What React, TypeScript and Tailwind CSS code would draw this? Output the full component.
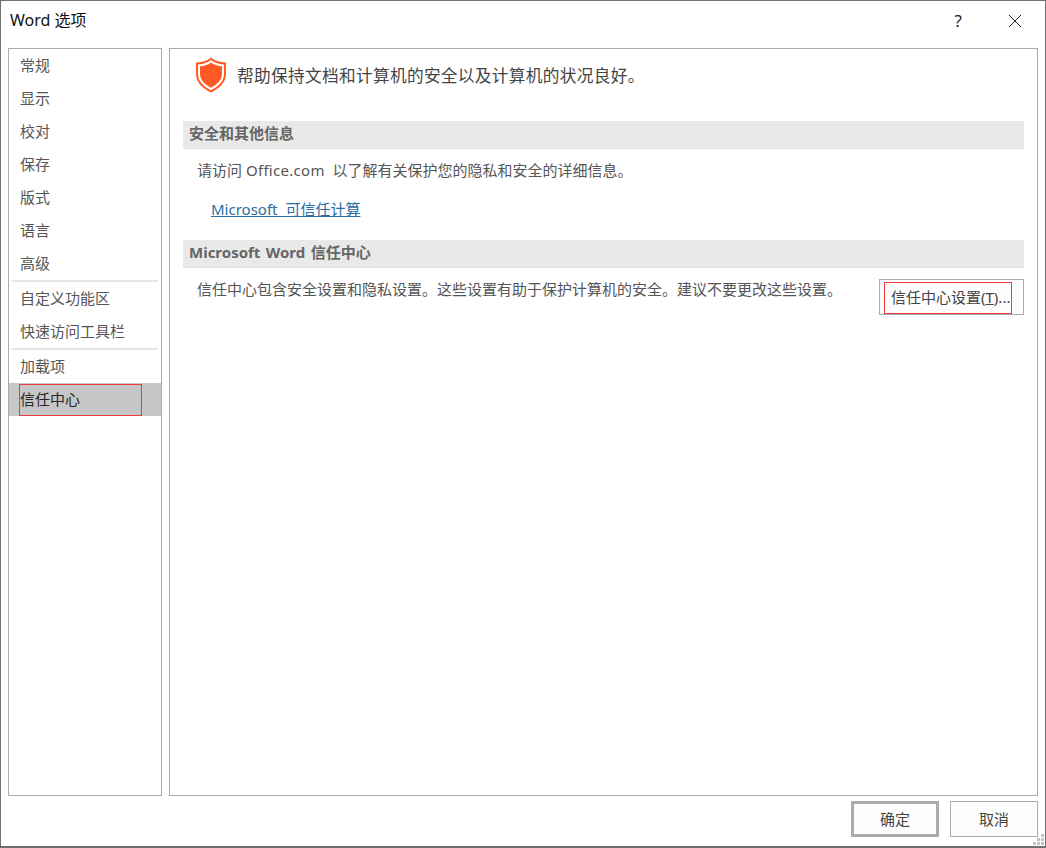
import React from "react";

const font = "[font-family:'Noto_Sans','Noto_Sans_CJK_SC',sans-serif]";

const groups = [
  ["常规", "显示", "校对", "保存", "版式", "语言", "高级"],
  ["自定义功能区", "快速访问工具栏"],
  ["加载项", "信任中心"],
];

function Shield() {
  return (
    <svg width="32" height="36" viewBox="0 0 32 36" className="shrink-0">
      <path
        d="M16 0.5 C19 3.5 24 5 31 5.5 L31 17 C31 25.5 24 31.5 16 35.5 C8 31.5 1 25.5 1 17 L1 5.5 C8 5 13 3.5 16 0.5 Z"
        fill="#ff5a24"
      />
      <path
        d="M16 3 C19 5.6 23.5 7 29 7.4 L29 17 C29 24.4 23 29.6 16 33.2 C9 29.6 3 24.4 3 17 L3 7.4 C8.5 7 13 5.6 16 3 Z"
        fill="#fff"
      />
      <path
        d="M16 5.4 C18.8 7.6 22.6 8.9 27 9.2 L27 17 C27 23 21.8 27.6 16 30.8 C10.2 27.6 5 23 5 17 L5 9.2 C9.4 8.9 13.2 7.6 16 5.4 Z"
        fill="#ff5a24"
      />
    </svg>
  );
}

function SectionHeader({ children }: { children: React.ReactNode }) {
  return (
    <div className="h-7 bg-[#e9e9e9] border-b border-[#e2e2e2] pl-[6px] pb-[2px] flex items-center text-[15px] font-bold text-[#666666] [word-spacing:1.5px]">
      {children}
    </div>
  );
}

function Sidebar() {
  return (
    <div className="w-[154px] shrink-0 border border-[#ababab]">
      {groups.map((items, g) => (
        <div key={g}>
          {g > 0 && <div className="mx-[3px] h-[2px] bg-[#e6e6e6]" />}
          {items.map((item) =>
            item === "信任中心" ? (
              <div key={item} className="h-[33px] bg-[#c6c6c6] text-[#262626] flex pt-[1px]">
                <span className="ml-[10px] w-[123px] border border-[#ee3b3b] pb-[2px] flex items-center text-[15px]">
                  {item}
                </span>
              </div>
            ) : (
              <div
                key={item}
                className="h-[33px] pl-[11px] flex items-center text-[15px] text-[#555555]"
              >
                {item}
              </div>
            ),
          )}
        </div>
      ))}
    </div>
  );
}

export default function App() {
  return (
    <div
      className={`${font} w-[1046px] h-[848px] bg-white border-t border-l border-r border-b-2 border-[#6f6f6f] flex flex-col overflow-hidden relative`}
    >
      {/* Title bar */}
      <div className="h-[47px] shrink-0 flex items-center pl-[9px] pb-[8px]">
        <span className="text-[16px] text-[#111111] mb-[2px]">Word 选项</span>
        <span className="ml-auto text-[17px] text-[#222222]">?</span>
        <svg width="14" height="14" viewBox="0 0 14 14" className="ml-[46px] mr-[23px]">
          <path d="M1 1 L13 13 M13 1 L1 13" stroke="#222222" strokeWidth="1" fill="none" />
        </svg>
      </div>

      <div className="flex gap-[7px] pl-[7px] pr-[7px] h-[748px] shrink-0">
        <Sidebar />

        {/* Main panel */}
        <div className="flex-1 border border-[#ababab] pl-[13px] pr-[13px] text-[15px] text-[#555555]">
          <div className="flex pl-[12px] pt-[8px] h-[72px] items-start gap-[10px]">
            <Shield />
            <span className="text-[16.67px] tracking-[0.02em] text-[#444444] pt-[6px]">
              帮助保持文档和计算机的安全以及计算机的状况良好。
            </span>
          </div>

          <SectionHeader>安全和其他信息</SectionHeader>
          <p className="pl-[14px] mt-[10px] leading-[22px]">
            请访问 <span className="tracking-[0.3px]">Office.com</span>&nbsp; 以了解有关保护您的隐私和安全的详细信息。
          </p>
          <a className="block ml-[28px] mt-[17px] leading-[22px] text-[#2b6ca3] underline [word-spacing:4px]">
            Microsoft 可信任计算
          </a>

          <div className="mt-[20px]">
            <SectionHeader>Microsoft Word 信任中心</SectionHeader>
          </div>
          <div className="flex items-start mt-[11px]">
            <p className="pl-[14px] leading-[22px] -mt-[1px]">
              信任中心包含安全设置和隐私设置。这些设置有助于保护计算机的安全。建议不要更改这些设置。
            </p>
            <div className="ml-auto w-[145px] h-[36px] border border-[#ababab] bg-[#fdfdfd] pl-[4px] pt-[2px]">
              <div className="w-[128px] h-[32px] border border-[#ee3b3b] pl-[6px] pb-[2px] flex items-center whitespace-nowrap text-[#444444]">
                信任中心设置(<span className="underline">T</span>)...
              </div>
            </div>
          </div>
        </div>
      </div>

      {/* Footer buttons */}
      <div className="flex justify-end gap-[11px] pr-[7px] pt-[5px]">
        <button className="w-[88px] h-[36px] border-[3px] border-[#ababab] bg-[#fdfdfd] text-[15px] text-[#444444]">
          确定
        </button>
        <button className="w-[88px] h-[36px] border border-[#ababab] bg-[#fdfdfd] text-[15px] text-[#444444]">
          取消
        </button>
      </div>

      {/* Resize grip */}
      <svg width="12" height="12" viewBox="0 0 12 12" className="absolute right-0 bottom-0">
        <path d="M8 0h3v3H8z M4 4h3v3H4z M8 4h3v3H8z M0 8h3v3H0z M4 8h3v3H4z M8 8h3v3H8z" fill="#c4c4c4" />
      </svg>
    </div>
  );
}
